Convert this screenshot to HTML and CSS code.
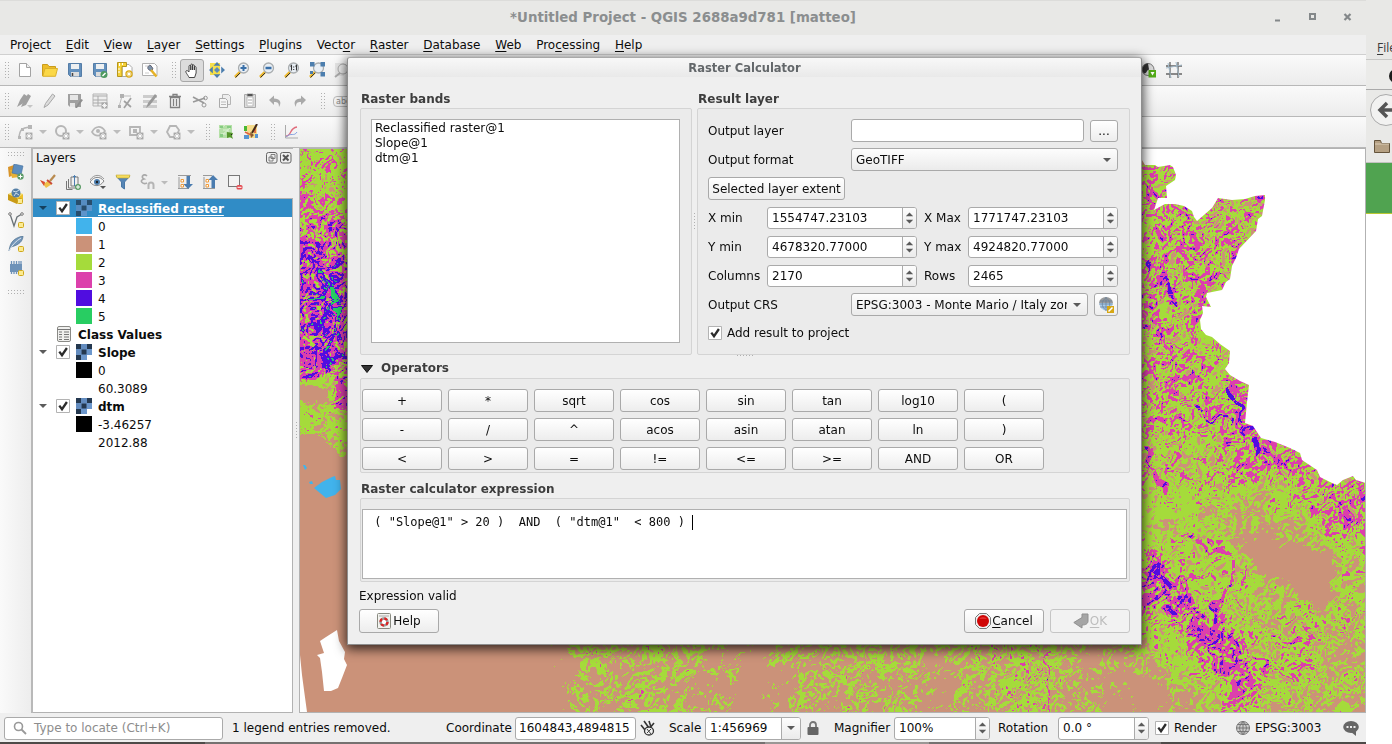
FILE: index.html
```html
<!DOCTYPE html>
<html lang="en">
<head>
<meta charset="utf-8">
<title>QGIS Raster Calculator</title>
<link rel="stylesheet" href="styles.css">
</head>
<body>
<svg class="defs" aria-hidden="true">
  <defs>
    <symbol id="plus-badge" viewBox="0 0 7 7"><path d="M.5 .5h6v6h-6z" fill="#a9a9a9"/><path d="M3.5 1v5M1 3.5h5M2 2l3 3M5 2L2 5" stroke="#fff" stroke-width=".8"/></symbol>
    <symbol id="raster" viewBox="0 0 16 16"><path fill="#6c97cc" d="M0 0h16v11h-5v5H0z"/><path fill="#24384f" d="M0 0h5v5H0zM11 0h5v5h-5zM5.5 5.5h5v5h-5zM0 11h5v5H0z"/><path fill="#3f628d" d="M5 0h6v5H5zM0 5h5v6H0z" opacity=".2"/></symbol>
    <symbol id="lens" viewBox="0 0 16 16"><path d="M1 15l5-5" stroke="#edb72b" stroke-width="2.6"/><path d="M1.500 15.500l5-5" stroke="#333" stroke-width="1"/><circle cx="9.500" cy="6" r="5" fill="#e9eff5" stroke="#a9adaf" stroke-width="1.300"/></symbol>
    <symbol id="globe" viewBox="0 0 16 16"><circle cx="8" cy="8" r="6.500" fill="#ccc" stroke="currentColor"/><path d="M8 1v14M1 8h14M2.500 4.500h11M2.500 11.500h11M8 1.500c-4.500 4-4.500 9 0 13c4.500-4 4.500-9 0-13" fill="none" stroke="currentColor"/></symbol>
    <symbol id="check" viewBox="0 0 14 14"><path d="M.5 .5h13v13H.5z" fill="#fff" stroke="#b3b3b3"/><path d="M3.300 6.600l2.700 3.600 4.900-7.200" fill="none" stroke="#2c2c2c" stroke-width="2.300"/></symbol>
    <symbol id="down" viewBox="0 0 8 4"><path d="M0 0h8L4 4z" fill="currentColor"/></symbol>
    <symbol id="spin" viewBox="0 0 14 20"><path d="M3 8l4-4 4 4zM3 12h8l-4 4z" fill="#5a5a5a"/></symbol>
    <symbol id="ybadge" viewBox="0 0 6 6"><rect x=".5" y=".5" width="5" height="5" rx="1" fill="#fceb91" stroke="#cfa81c"/></symbol>
  </defs>
</svg>

<div class="screen">
 <div class="main">
  <header class="titlebar"><span class="wtitle">*Untitled Project - QGIS 2688a9d781 [matteo]</span>
   <svg class="wbuttons" viewBox="0 0 80 12"><path d="M3 9.500h5" stroke="#84888a" stroke-width="2"/><path d="M38 3h5v5h-5z" fill="none" stroke="#84888a" stroke-width="2"/><path d="M72.500 3l6 6M78.500 3l-6 6" stroke="#84888a" stroke-width="2.200"/></svg>
  </header>
  <nav class="menubar"><span>Pro<u>j</u>ect</span><span><u>E</u>dit</span><span><u>V</u>iew</span><span><u>L</u>ayer</span><span><u>S</u>ettings</span><span><u>P</u>lugins</span><span>Vect<u>o</u>r</span><span><u>R</u>aster</span><span><u>D</u>atabase</span><span><u>W</u>eb</span><span>Pro<u>c</u>essing</span><span><u>H</u>elp</span></nav>

  <div class="toolbar">
   <i class="grip"></i>
   <div class="tools first">
    <svg viewBox="0 0 16 16"><path d="M2.500 1.500h7l4 4v9h-11z" fill="#fff" stroke="#a3a3a3"/><path d="M9.500 1.500v4h4" fill="#eee" stroke="#a3a3a3"/></svg>
    <svg viewBox="0 0 16 16"><path d="M.5 14V2.500h5l1.500 2h6.500V7" fill="#eebd28" stroke="#c99c1c"/><path d="M.8 14.300L3 6.500h12.500l-2 7.800z" fill="#fbd847" stroke="#dbb12b"/></svg>
    <svg viewBox="0 0 16 16"><path d="M1.500 1.500h13v13h-11l-2-2z" fill="#6390bd" stroke="#557da7"/><path d="M4 2h8v5H4z" fill="#eef0f1"/><path d="M4 10h8v4.500H4z" fill="#dcdcdc"/><path d="M5.500 11v3" stroke="#444" stroke-width="1.500"/></svg>
    <svg viewBox="0 0 16 16"><path d="M1.500 1.500h13v13h-11l-2-2z" fill="#6390bd" stroke="#557da7"/><path d="M4 2h8v5H4z" fill="#eef0f1"/><path d="M4 10h6v4.500H4z" fill="#dcdcdc"/><circle cx="12" cy="12.500" r="3.500" fill="#4e9a60"/><path d="M10.500 14l3-3" stroke="#fff" stroke-width="1.400"/></svg>
    <svg viewBox="0 0 16 16"><path d="M5 2.500h7l3 3v9H5z" fill="#fff" stroke="#aaa"/><path d="M.5 .5h9v4H5v10H.500z" fill="#f6d238" stroke="#b5951f"/><path d="M2.500 1v3M5.500 1v2M1 7h2M1 10h2" stroke="#fff"/><circle cx="12" cy="12" r="3.700" fill="#dcac19"/><path d="M9.500 12h5M12 9.500v5M10.500 10.500l3 3M13.500 10.500l-3 3" stroke="#fff"/></svg>
    <svg viewBox="0 0 16 16"><path d="M.5 1.500h12l2.500 2.500v9.500H.5z" fill="#fff" stroke="#b0b0b0"/><path d="M3 4h7M3 11h4" stroke="#ccc"/><path d="M8 3c-2 1-3 3-1.500 4.500L9 9l2-2-1-2z" fill="#7d93a8" stroke="#667"/><path d="M9 8l5.500 6.500" stroke="#e6b226" stroke-width="2.500"/></svg>
   </div>
   <i class="grip"></i>
   <div class="tools nav">
    <span class="pressed"><svg viewBox="0 0 16 16"><path d="M5 14.500C4 12 1 9 2 8s2 0 3 1V3.200c0-1.200 1.800-1.200 1.800 0V7V2c0-1.300 1.800-1.300 1.800 0v5V2.700c0-1.200 1.800-1.200 1.800 0V7V4.500c0-1.200 1.700-1.200 1.700 0V10l-1.500 4.500z" fill="#fff" stroke="#333" stroke-width=".9"/></svg></span>
    <svg viewBox="0 0 16 16"><path d="M1 1h10v12H1z" fill="#f6e04a"/><path d="M8 0l3.500 3.800h-7zM8 16l3.500-3.800h-7zM0 8l3.800-3.500v7zM16 8l-3.800-3.500v7z" fill="#4c7eae"/><path d="M8 5l3 3-3 3-3-3z" fill="#5d8bb8"/></svg>
    <svg viewBox="0 0 16 16"><use href="#lens"/><path d="M9.500 3v6M6.500 6h6" stroke="#386fa8" stroke-width="2"/></svg>
    <svg viewBox="0 0 16 16"><use href="#lens"/><path d="M6.500 6h6" stroke="#386fa8" stroke-width="2.500"/></svg>
    <svg viewBox="0 0 16 16"><use href="#lens"/><path d="M6.500 4.500L7.500 3.500V8.500M11.500 4.500l1-1V8.500M9.700 4.500v1M9.700 7v1" fill="none" stroke="#333" stroke-width="1.100"/></svg>
    <svg viewBox="0 0 16 16"><use href="#lens"/><path d="M1 0h4.500v4.500H1zM11.500 0H16v4.500h-4.500zM11.500 10H16v4.500h-4.500zM1 9h3v3H1z" fill="#4c7eae"/></svg>
    <svg viewBox="0 0 16 16"><path d="M1 1h9v13H1z" fill="#e3e3e3"/><circle cx="9" cy="7" r="5" fill="#eee" stroke="#aaa"/><path d="M1 15l5-4" stroke="#aaa" stroke-width="2"/></svg>
   </div>
   <div class="tools tail">
    <svg viewBox="0 0 16 16"><circle cx="7" cy="7.500" r="6" fill="#ddd" stroke="#777"/><path d="M7 1.500a6 6 0 0 0-4 10c3 0 2-3 5-4z" fill="#333"/><path d="M7.500 8H15v7.500H7.500z" fill="#53ad18"/><path d="M9.500 10h4l-2 3.500z" fill="#fff"/></svg>
    <svg viewBox="0 0 16 16"><path d="M4 0v16M12 0v16M0 4h16M0 12h16" stroke="#666" stroke-width="1.300"/><path d="M2 1l3 15M10 0l3 15M0 6l16-3" stroke="#a3b9c9" fill="none"/></svg>
   </div>
  </div>
  <div class="toolbar">
   <i class="grip"></i>
   <div class="tools first grey">
    <svg viewBox="0 0 16 16"><path d="M0 14L3 7l4-6 3 2-5 8zM4 14l3-7 4-6 3 2-5 9z" fill="#a0a0a0"/><path d="M10 12h6l-3 3z" fill="#c5c5c5"/></svg>
    <svg viewBox="0 0 16 16"><path d="M2 14.500l1.500-4L10.500 1l2.500 2-7 9z" fill="#ddd" stroke="#a8a8a8"/></svg>
    <svg viewBox="0 0 16 16"><path d="M1 1h13v13H3l-2-2z" fill="#a0a0a0"/><path d="M3 2h8v5H3zM3 10h5v4H3z" fill="#e6e6e6"/><path d="M8 15l6-9 2 1-6 8z" fill="#8f8f8f"/></svg>
    <svg viewBox="0 0 16 16"><path d="M1 1h14v12H1z" fill="#eee" stroke="#b5b5b5"/><path d="M1 3h14M1 7h14M1 10h14M6 3v10" stroke="#aaa"/><use href="#plus-badge" x="9" y="9" width="7" height="7"/></svg>
    <svg viewBox="0 0 16 16"><path d="M2 14L5 3l9 0" fill="none" stroke="#bbb"/><path d="M3 1h4v4H3zM1 12h3v3H1z" fill="#b0b0b0"/><path d="M7 8l7 6M14 5l-7 10" stroke="#a1a1a1" stroke-width="1.700"/></svg>
    <svg viewBox="0 0 16 16"><path d="M1 2h14v3H1zM1 7h14v3H1zM1 12h14v3H1z" fill="#ccc"/><path d="M4 15l2-5 7-9 2 2-7 9z" fill="#999"/></svg>
    <svg viewBox="0 0 16 16"><path d="M3.500 4.500h9v10h-9zM2 3.500h12M6 3V1.500h4V3M6.500 6v7M9.500 6v7" fill="none" stroke="#808080" stroke-width="1.300"/></svg>
    <svg viewBox="0 0 16 16"><path d="M1 4l11 6M1 9l12-4" stroke="#999" stroke-width="1.600"/><circle cx="13.500" cy="5" r="1.800" fill="none" stroke="#999"/><circle cx="12" cy="12" r="2" fill="none" stroke="#999"/></svg>
    <svg viewBox="0 0 16 16"><path d="M5.500 1.500h6l2 2v8h-8z" fill="#eee" stroke="#b5b5b5"/><path d="M2.500 5.500h6l2 2v7h-8z" fill="#f5f5f5" stroke="#aaa"/><path d="M4 9h5M4 11.500h5" stroke="#bbb"/></svg>
    <svg viewBox="0 0 16 16"><path d="M2.500 1.500h11v13h-11z" fill="#ddd" stroke="#aaa"/><path d="M5 4h6v9H5z" fill="#fff" stroke="#bbb"/><path d="M5 1h6v2H5zM6 7h4M6 10h4" stroke="#aaa"/></svg>
    <svg viewBox="0 0 16 16"><path d="M2 7l5-4.500v3c6 0 8 4 5 8.500 0-4-1-5-5-5v3z" fill="#a9a9a9"/></svg>
    <svg viewBox="0 0 16 16"><path d="M14 7L9 2.500v3C3 5.500 1 9.500 4 14c0-4 1-5 5-5v3z" fill="#a9a9a9"/></svg>
   </div>
   <i class="grip"></i>
   <span class="abc">abc</span>
  </div>
  <div class="toolbar">
   <i class="grip"></i>
   <div class="tools shapes">
    <svg viewBox="0 0 16 16"><path d="M2 13C3 6 4 4 13 3" fill="none" stroke="#b6b6b6" stroke-width="1.500"/><path d="M1 12h3v3H1zM11 1h4v4h-4zM4 4h3v3H4z" fill="#b6b6b6"/><use href="#plus-badge" x="8" y="8" width="8" height="8"/></svg><svg class="dd" viewBox="0 0 8 4"><use href="#down"/></svg>
    <svg viewBox="0 0 16 16"><circle cx="7" cy="7" r="5" fill="none" stroke="#b6b6b6" stroke-width="2"/><use href="#plus-badge" x="8" y="8" width="8" height="8"/></svg><svg class="dd" viewBox="0 0 8 4"><use href="#down"/></svg>
    <svg viewBox="0 0 16 16"><path d="M1 8c3-6 9-7 13-1-4 6-10 6-13 1z" fill="none" stroke="#b6b6b6" stroke-width="1.700"/><circle cx="7" cy="7" r="2" fill="#b6b6b6"/><use href="#plus-badge" x="8" y="8" width="8" height="8"/></svg><svg class="dd" viewBox="0 0 8 4"><use href="#down"/></svg>
    <svg viewBox="0 0 16 16"><path d="M2 3h10v8H2z" fill="none" stroke="#b6b6b6" stroke-width="1.800"/><path d="M5 5h4v4H5z" fill="#b6b6b6"/><use href="#plus-badge" x="8" y="8" width="8" height="8"/></svg><svg class="dd" viewBox="0 0 8 4"><use href="#down"/></svg>
    <svg viewBox="0 0 16 16"><path d="M2 8l3-6h6l3 4-3 7H5z" fill="none" stroke="#b6b6b6" stroke-width="1.800"/><use href="#plus-badge" x="8" y="8" width="8" height="8"/></svg><svg class="dd" viewBox="0 0 8 4"><use href="#down"/></svg>
   </div>
   <i class="grip"></i>
   <div class="tools osm">
    <svg viewBox="0 0 16 16"><path d="M1 1h13v13H1z" fill="#b4e0a6"/><path d="M1 5l6-4M2 13L13 3M5 6h5v3M3 10h5" stroke="#dff2d6" fill="none"/><path d="M2 2h3v2H2zM9 2h4v2H9zM2 10h3v3H2z" fill="#86cc82"/><path d="M9 8l6 1-1 3 1 3-3-2-3 1z" fill="#55962c"/><path d="M13 10l1 1" stroke="#222"/></svg>
    <svg viewBox="0 0 16 16"><path d="M1 2h5v5H1z" fill="#49b831"/><path d="M4 1h10v13H4z" fill="#f6dc8c"/><path d="M2 8l6 3M12 4v5" stroke="#e0673f" stroke-width="1.800"/><path d="M1 11h5v4H1zM12 10h3v4h-3z" fill="#5794d1"/><path d="M14 0L9 9" fill="none" stroke="#442a18" stroke-width="2"/><path d="M7 8l4 3-3 3z" fill="#8a5a30"/></svg>
   </div>
   <i class="grip"></i>
   <div class="tools"><svg viewBox="0 0 16 16"><path d="M2.500 1v13H15" fill="none" stroke="#aaa"/><path d="M3 12c6 0 3-8 11-9" fill="none" stroke="#e06b7b" stroke-width="1.300"/><path d="M3 13c5-5 8 0 11-5" fill="none" stroke="#839fe0"/></svg></div>
  </div>

  <div class="workspace">
   <aside class="sidebar">
    <i class="hgrip"></i>
    <svg viewBox="0 0 16 16"><path d="M0 3l6-2v10l-5 2z" fill="#d8942a"/><path d="M2 6l8-1 1 8-7 1z" fill="#e7b137"/><path d="M6 0l9 2-2 9-9-2z" fill="#5c8cbd" stroke="#436f9e" stroke-width=".6"/><circle cx="12.500" cy="12.500" r="3.200" fill="#5c9b68"/><path d="M12.500 10.500v4M10.500 12.500h4" stroke="#fff"/></svg>
    <svg viewBox="0 0 16 16"><path d="M0 6l7-3 8 3-6 4z" fill="#f8dd62"/><path d="M0 6l9 4v6l-9-4z" fill="#c99a16"/><path d="M9 10l6-4v5l-6 5z" fill="#eebf29"/><circle cx="8" cy="5" r="4.500" fill="#557fa6"/><path d="M5 3l3 1 3-2M6 8l2-3 3 2" stroke="#cfdeea" fill="none"/><use href="#ybadge" x="9" y="10" width="6" height="6"/></svg>
    <svg viewBox="0 0 16 16"><path d="M2 2l4 12 3-9 5-3" fill="none" stroke="#6a7277" stroke-width="1.300"/><circle cx="2" cy="2" r="1.300" fill="#fff" stroke="#777"/><circle cx="14" cy="2" r="1.300" fill="#fff" stroke="#777"/><use href="#ybadge" x="10" y="10" width="6" height="6"/></svg>
    <svg viewBox="0 0 16 16"><path d="M1 15C2 6 6 2 15 0c0 5-4 9-12 11z" fill="#7396b9" stroke="#4f718f" stroke-width=".7"/><path d="M1 15C4 9 8 5 13 2" stroke="#dce5ee" fill="none"/><use href="#ybadge" x="10" y="10" width="6" height="6"/></svg>
    <svg viewBox="0 0 16 16"><path d="M2 4h12v8H2z" fill="#6e92b8"/><path d="M3.500 1v3M6 1v3M8.500 1v3M11 1v3M13 1v3M3.500 12v2M6 12v2M8.500 12v2" stroke="#6e92b8" stroke-width="1.300"/><use href="#ybadge" x="10" y="10" width="6" height="6"/></svg>
    <i class="hgrip low"></i>
   </aside>
   <section class="layers">
    <div class="dock-title"><span>Layers</span><svg viewBox="0 0 26 12"><rect x=".5" y=".5" width="10.500" height="10.500" rx="2" fill="none" stroke="#666"/><path d="M5 2.500h4v4H5zM3 5h4v4H3z" fill="#efefef" stroke="#666" stroke-width=".8"/><rect x="14.500" y=".5" width="10.500" height="10.500" rx="2" fill="none" stroke="#666"/><path d="M17 3l5.500 5.500M22.500 3L17 8.500" stroke="#555" stroke-width="2"/></svg></div>
    <div class="dock-tools">
     <svg viewBox="0 0 16 16"><path d="M10 7l5-6" stroke="#b98b50" stroke-width="2.200"/><path d="M0 6l5 3 4-3 3 4-6 4z" fill="#f0c04a"/><path d="M0 6l5 2-1 4z" fill="#d94c35"/><path d="M7 6l5 4" stroke="#c9473a" stroke-width="1.800"/></svg>
     <svg viewBox="0 0 16 16"><path d="M6 3h7v9H6zM3.500 5v9h7M1.500 7v8.500h6" fill="none" stroke="#777"/><path d="M9.500 12V1.500L8 3M9.500 1.500L11 3" stroke="#4a7daf" fill="none"/><circle cx="13" cy="13" r="3" fill="#5b9b66"/><path d="M13 11v4M11 13h4" stroke="#fff"/></svg>
     <svg viewBox="0 0 16 16"><path d="M0 8c4-6 10-6 14-1-4 6-10 6-14 1z" fill="#f5f5f5" stroke="#888"/><path d="M0 6c4-6 10-6 14-1" fill="none" stroke="#999"/><circle cx="7" cy="8" r="3" fill="#4d7fb0"/><circle cx="7" cy="8" r="1.200" fill="#222"/><path d="M10 12h6l-3 3z" fill="#555"/></svg>
     <svg viewBox="0 0 16 16"><path d="M1 2h14L9.500 8v7l-3-2V8z" fill="#5585b5" stroke="#4877a6"/><path d="M1 1h14l-1 3H2z" fill="#f5dc5e" stroke="#c6ab33" stroke-width=".6"/></svg>
     <svg class="eps" viewBox="0 0 28 16"><path d="M7 2C4-1 0 3 4 5-1 6 2 11 7 9" fill="none" stroke="#aaa" stroke-width="1.600"/><path d="M8.500 15v-4a2.500 2.500 0 0 1 5 0v4" fill="none" stroke="#b5b5b5" stroke-width="2"/><path d="M21 7h7l-3.500 3.500z" fill="#bbb"/></svg>
     <svg viewBox="0 0 16 16"><path d="M1 1.500h13M2 3v11M1 14.500h11" fill="none" stroke="#999"/><path d="M4 5.500h2.500v2.500H4zM4 10.500h2.500v2.500H4z" fill="#fff" stroke="#f09a38"/><path d="M9.500 2h3.500v8h3l-5 5-4.500-5h3z" fill="#4b7caf"/></svg>
     <svg viewBox="0 0 16 16"><path d="M1 1.500h9M2 3v11M1 14.500h12" fill="none" stroke="#999"/><path d="M4 5.500h2.500v2.500H4zM4 10.500h2.500v2.500H4z" fill="#fff" stroke="#f09a38"/><path d="M9.500 14H13V6h3l-5-5-4.500 5h3z" fill="#4b7caf"/></svg>
     <svg viewBox="0 0 16 16"><rect x="1.500" y="1.500" width="11" height="11" fill="#f3f3f3" stroke="#777"/><rect x="9.500" y="11" width="6" height="4.500" rx="1.500" fill="#e34b51"/><path d="M10.500 13.300h4" stroke="#fff"/></svg>
    </div>
    <div class="tree">
     <div class="row sel"><svg class="exp" viewBox="0 0 8 4"><use href="#down"/></svg><svg class="chk"><use href="#check"/></svg><svg class="ric"><use href="#raster"/></svg><b><u>Reclassified raster</u></b></div>
     <div class="row leg"><i class="sw c0"></i>0</div>
     <div class="row leg"><i class="sw c1"></i>1</div>
     <div class="row leg"><i class="sw c2"></i>2</div>
     <div class="row leg"><i class="sw c3"></i>3</div>
     <div class="row leg"><i class="sw c4"></i>4</div>
     <div class="row leg"><i class="sw c5"></i>5</div>
     <div class="row table"><svg class="tic" viewBox="0 0 14 16"><rect x=".5" y=".5" width="13" height="15" rx="1.500" fill="#f0f0ee" stroke="#8a8a86"/><path d="M.5 3.500h13M2 6h3M7 6h5M2 8.500h3M7 8.500h5M2 11h3M7 11h5M2 13.500h3M7 13.500h5" stroke="#777"/></svg><b>Class Values</b></div>
     <div class="row"><svg class="exp" viewBox="0 0 8 4"><use href="#down"/></svg><svg class="chk"><use href="#check"/></svg><svg class="ric"><use href="#raster"/></svg><b>Slope</b></div>
     <div class="row leg"><i class="sw ck"></i>0</div>
     <div class="row leg"><i class="sw"></i>60.3089</div>
     <div class="row"><svg class="exp" viewBox="0 0 8 4"><use href="#down"/></svg><svg class="chk"><use href="#check"/></svg><svg class="ric"><use href="#raster"/></svg><b>dtm</b></div>
     <div class="row leg"><i class="sw ck"></i>-3.46257</div>
     <div class="row leg"><i class="sw"></i>2012.88</div>
    </div>
   </section>
   <div class="splitter"><i></i></div>
   <div class="mapframe"><canvas id="map" width="1065" height="563"></canvas></div>
  </div>

  <footer class="status">
   <div class="field locator"><svg viewBox="0 0 14 14"><circle cx="5.500" cy="5.500" r="4" fill="none" stroke="#999" stroke-width="1.600"/><path d="M8.500 8.500l4.500 4.500" stroke="#999" stroke-width="1.800"/></svg>Type to locate (Ctrl+K)</div>
   <span>1 legend entries removed.</span>
   <span>Coordinate</span><div class="field coord">1604843,4894815</div>
   <svg class="mouse" viewBox="0 0 16 16"><path d="M1 5l4 5M4 1l5 7M9 1l2 6M14 3l-5 6" stroke="#333" stroke-width="1.600"/><ellipse cx="9" cy="11" rx="4.500" ry="4" fill="#eee" stroke="#333" stroke-width="1.300"/><path d="M7 9l4 5M11 9l-4 4" stroke="#444"/></svg>
   <span>Scale</span><div class="field split scale">1:456969<em><svg class="arr" viewBox="0 0 8 4"><use href="#down"/></svg></em></div>
   <svg class="lock" viewBox="0 0 12 14"><path d="M3 7V4a3 3 0 0 1 6 0v3" fill="none" stroke="#777" stroke-width="1.800"/><rect x=".5" y="6" width="11" height="8" rx="1" fill="#666"/></svg>
   <span>Magnifier</span><div class="field split">100%<em><svg class="sp"><use href="#spin"/></svg></em></div>
   <span>Rotation</span><div class="field split rot">0.0 °<em><svg class="sp"><use href="#spin"/></svg></em></div>
   <svg class="chk"><use href="#check"/></svg><span>Render</span>
   <svg class="gl"><use href="#globe"/></svg><span>EPSG:3003</span>
   <svg class="bubble" viewBox="0 0 16 16"><ellipse cx="8" cy="7" rx="7.800" ry="6" fill="#666"/><path d="M8 12l5-1v5z" fill="#666"/><path d="M3.500 7h2M7 7h2M10.500 7h2" stroke="#eee" stroke-width="2"/></svg>
  </footer>
  <div class="taskbar"></div>
 </div>

 <aside class="browser">
  <div class="bmenu"><u>F</u>ile</div>
  <div class="btab"><svg viewBox="0 0 26 29"><circle cx="30" cy="16" r="7" fill="#1c1c1c"/></svg></div>
  <div class="bnav"><svg viewBox="0 0 26 72"><circle cx="20" cy="20" r="15.500" fill="#f2f2f1" stroke="#aaa"/><path d="M26 20H15M21 13l-7 7 7 7" fill="none" stroke="#555" stroke-width="3.500"/><path d="M8.500 62.500v-12h6l1 3h8v9z" fill="#b5a083" stroke="#65543c"/><path d="M9 54h14" stroke="#dccdb7"/></svg></div>
  <div class="bgreen"></div>
 </aside>

 <div class="dialog">
  <div class="dtitle">Raster Calculator</div>
  <div class="dbody">
   <div class="top">
    <section><h3>Raster bands</h3><div class="group bands"><div class="list"><div>Reclassified raster@1</div><div>Slope@1</div><div>dtm@1</div></div></div></section>
    <i class="vgrip"></i>
    <section><h3>Result layer</h3><div class="group result">
     <div class="frow"><label>Output layer</label><div class="field grow"></div><button class="dots">...</button></div>
     <div class="frow"><label>Output format</label><div class="combo grow">GeoTIFF<svg class="arr" viewBox="0 0 8 4"><use href="#down"/></svg></div></div>
     <div class="frow"><button class="ext">Selected layer extent</button></div>
     <div class="frow sp4"><span>X min</span><div class="field split">1554747.23103<em><svg class="sp"><use href="#spin"/></svg></em></div><span>X Max</span><div class="field split">1771747.23103<em><svg class="sp"><use href="#spin"/></svg></em></div></div>
     <div class="frow sp4"><span>Y min</span><div class="field split">4678320.77000<em><svg class="sp"><use href="#spin"/></svg></em></div><span>Y max</span><div class="field split">4924820.77000<em><svg class="sp"><use href="#spin"/></svg></em></div></div>
     <div class="frow sp4"><span>Columns</span><div class="field split">2170<em><svg class="sp"><use href="#spin"/></svg></em></div><span>Rows</span><div class="field split">2465<em><svg class="sp"><use href="#spin"/></svg></em></div></div>
     <div class="frow"><label>Output CRS</label><div class="combo grow"><span class="clip">EPSG:3003 - Monte Mario / Italy zone 1</span><svg class="arr" viewBox="0 0 8 4"><use href="#down"/></svg></div><button class="crs"><svg viewBox="0 0 16 16"><circle cx="8" cy="7" r="6.500" fill="#a9cbea"/><path d="M1 6a7 6 0 0 1 14 0z" fill="#9a9a9a"/><path d="M8 .5v13M1 7h14M2 4h12M2 10h12M8 .5c-5 4-5 9 0 13c5-4 5-9 0-13" fill="none" stroke="#64809a" stroke-width=".7"/><path d="M9 9h7v7H9z" fill="#d7a714"/><path d="M10.500 14.500l4-4" stroke="#fff" stroke-width="1.600"/></svg></button></div>
     <div class="frow last"><svg class="chk"><use href="#check"/></svg><span>Add result to project</span></div>
    </div></section>
   </div>
   <i class="mgrip"></i>
   <h3 class="ophead"><svg viewBox="0 0 12 8"><path d="M.5 .5h11L6 7.500z" fill="#333" stroke="#111"/></svg>Operators</h3>
   <div class="group ops">
    <button>+</button><button>*</button><button>sqrt</button><button>cos</button><button>sin</button><button>tan</button><button>log10</button><button>(</button>
    <button>-</button><button>/</button><button>^</button><button>acos</button><button>asin</button><button>atan</button><button>ln</button><button>)</button>
    <button>&lt;</button><button>&gt;</button><button>=</button><button>!=</button><button>&lt;=</button><button>&gt;=</button><button>AND</button><button>OR</button>
   </div>
   <h3 class="exhead">Raster calculator expression</h3>
   <div class="group expr"><div class="code"> ( "Slope@1" &gt; 20 )  AND  ( "dtm@1"  &lt; 800 ) <i></i></div></div>
   <div class="valid">Expression valid</div>
   <div class="actions">
    <button><svg viewBox="0 0 14 16"><rect x=".5" y=".5" width="13" height="15" rx="1" fill="#f3f3ef" stroke="#888a80"/><path d="M2 3h10" stroke="#aaa"/><circle cx="7" cy="9" r="3.500" fill="#fff" stroke="#999" stroke-width="2.400"/><circle cx="7" cy="9" r="3.500" fill="none" stroke="#d22" stroke-width="2.400" stroke-dasharray="3 2.500"/></svg>Help</button>
    <button class="cancel"><svg viewBox="0 0 16 16"><path d="M4.500 .5h7l4 4v7l-4 4h-7l-4-4v-7z" fill="#eee" stroke="#777"/><circle cx="8" cy="8" r="6" fill="#cf0505"/><path d="M4 6a4.500 3.500 0 0 1 8 0z" fill="#e22e2e"/></svg><span><u>C</u>ancel</span></button>
    <button class="ok"><svg viewBox="0 0 16 16"><path d="M9 4.500V1h6v7c0 2.500-2 4-6 4v3L.8 9.500 9 4.500z" fill="#a5a5a5" stroke="#8f8f8f"/></svg><span><u>O</u>K</span></button>
   </div>
  </div>
 </div>
</div>
<script src="map.js"></script>
</body>
</html>
```
FILE: styles.css
```css
* { box-sizing: border-box; }
body { margin: 0; font: 12px/15px "DejaVu Sans", sans-serif; color: #0c0c0c; overflow: hidden; }
svg { display: block; flex: none; }
i, em { font-style: normal; }
u { text-decoration-thickness: 1px; text-underline-offset: 2px; }
.defs { position: absolute; width: 0; height: 0; }
.screen { position: relative; display: flex; width: 1392px; height: 744px; background: #fff; }
.main { width: 1366px; display: flex; flex-direction: column; background: #efefef; }

.titlebar { height: 35px; display: flex; align-items: center; justify-content: center; background: #e8e8e6; border-top: 1px solid #dcdcda; padding-bottom: 2px; position: relative; }
.wtitle { font-weight: bold; font-size: 13.35px; color: #8b8e8f; }
.wbuttons { position: absolute; right: 14px; top: 10px; width: 80px; height: 12px; }
.menubar { height: 20px; display: flex; gap: 14.73px; padding: 3px 0 0 10px; line-height: 14px; border-bottom: 1px solid #d0d0d0; }
.toolbar { height: 31px; flex: none; display: flex; align-items: center; padding-left: 5px; background: linear-gradient(#fafafa, #ececec); border-bottom: 1px solid #b8b8b8; }
.grip, .hgrip, .vgrip, .mgrip, .splitter i { background: radial-gradient(circle at .5px .5px, #b0b0b0 .6px, transparent .7px) 0 0 / 3px 3px; }
.grip { width: 4px; height: 17px; flex: none; }
.tools { display: flex; align-items: center; gap: 9px; }
.tools svg { width: 16px; height: 16px; }
.tools.first { margin: 0 14px 0 8px; }
.tools.first.grey { margin-right: 13px; }
.nav { margin-left: 4px; }
.pressed { width: 24px; height: 23px; padding: 3px; margin-right: -4px; border: 1px solid #a8a8a8; border-radius: 3px; background: #dcdcdc; }
.tail { margin-left: 791px; }
.abc { margin-left: 8px; width: 24px; font-size: 8px; color: #888; border: 1px solid #bbb; border-radius: 4px; line-height: 9px; padding-left: 2px; }
.shapes { margin: 0 4px 0 8px; gap: 0; }
.shapes svg { margin-right: 6px; }
.shapes svg.dd { width: 8px; height: 4px; margin-right: 7px; color: #bdbdbd; }
.osm { margin: 0 12px 0 8px; }
.toolbar .grip + .tools:last-child { margin-left: 8px; }

.workspace { height: 565px; flex: none; display: flex; }
.sidebar { width: 33px; padding: 4px 0 0 8px; background: linear-gradient(90deg, #fafafa, #ededed); border-right: 2px solid #b9b9b9; }
.sidebar svg { width: 16px; height: 16px; margin-bottom: 8px; }
.hgrip { display: block; width: 17px; height: 5px; margin-bottom: 7px; }
.hgrip.low { margin-top: 14px; }
.layers { width: 260px; display: flex; flex-direction: column; border-top: 1px solid #b9b9b9; }
.dock-title { height: 18px; display: flex; align-items: center; justify-content: space-between; padding: 0 1px 0 3px; }
.dock-title svg { width: 26px; height: 12px; }
.dock-tools { height: 31px; display: flex; align-items: center; gap: 9px; padding: 0 0 1px 7px; }
.dock-tools svg { width: 16px; height: 16px; }
.dock-tools .eps { width: 28px; height: 16px; }
.tree { flex: 1; background: #fff; border: 1px solid #b2b2b2; border-left: 0; }
.row { height: 18px; display: flex; align-items: center; padding: 2px 0 0 6px; }
.row.sel { background: #308cc6; color: #fff; }
.row.sel .exp { color: #14405e; }
.row.sel .ric { opacity: .75; }
.exp { width: 8px; height: 4px; margin-bottom: 2px; color: #5c5c5c; }
.chk { width: 14px; height: 14px; }
.row .chk { margin: 0 6px 2px 9px; }
.ric { width: 16px; height: 16px; margin: 0 6px 2px 0; }
.row.leg { padding-left: 43px; }
.sw { width: 16px; height: 16px; margin: 0 6px 2px 0; }
.c0 { background: #41b3ec; } .c1 { background: #cb9279; } .c2 { background: #a5db3b; }
.c3 { background: #dc40ac; } .c4 { background: #500de0; } .c5 { background: #28cd62; } .ck { background: #000; }
.row.table { padding-left: 24px; }
.tic { width: 14px; height: 16px; margin: 0 7px 2px 0; }
.splitter { width: 6px; display: flex; align-items: center; justify-content: center; }
.splitter i { width: 1px; height: 17px; }
.mapframe { width: 1067px; height: 565px; border: 1px solid #b2b2b2; background: #fff; }
#map { display: block; }

.field { height: 23px; background: #fff; border: 1px solid #aaa; border-radius: 3px; padding-left: 4px; display: flex; align-items: center; white-space: nowrap; overflow: hidden; }
.split { height: 22px; justify-content: space-between; }
.split em { width: 14px; align-self: stretch; border-left: 1px solid #aaa; display: grid; place-items: center; background: linear-gradient(#fdfdfd, #ebebeb); }
.sp { width: 13px; height: 20px; }
.arr { width: 8px; height: 4px; color: #5a5a5a; }
.status { height: 29px; flex: none; display: grid; align-items: center; padding: 1px 0 0 4px; grid-template-columns: 228px 214px 69px 125px 29px 36px 102px 27px 60px 104px 60px 97px 19px 61px 20px 88px 16px; }
.status .field { height: 23px; }
.status .locator { width: 219px; color: #8d8d8d; gap: 7px; padding-left: 8px; }
.locator svg { width: 14px; height: 14px; }
.coord { width: 121px; padding-left: 3px; }
.status .split { width: 96px; }
.status .rot { width: 91px; }
.status .scale em { width: 19px; }
.mouse { width: 16px; height: 16px; }
.lock { width: 12px; height: 14px; }
.gl { width: 16px; height: 16px; color: #777; }
.bubble { width: 16px; height: 16px; }
.taskbar { flex: 1; background: linear-gradient(90deg, #4e4a48 0 15%, #757170 15% 56%, #9a9795 56% 68%, #757170 68% 85%, #4e4a48 85%); }

.browser { width: 26px; background: #fff; overflow: hidden; }
.bmenu { height: 60px; padding: 40px 0 0 11px; background: #e8e8e6; border-bottom: 1px solid #c8c8c6; font-family: "Open Sans", sans-serif; color: #3a3a3a; }
.btab { height: 30px; background: #ebebe9; border-bottom: 1px solid #aaa; }
.bnav { height: 73px; background: #e9e9e7; border-bottom: 1px solid #c2c2c0; }
.btab svg { width: 26px; height: 29px; }
.bnav svg { width: 26px; height: 72px; }
.bgreen { height: 51px; background: #50a350; border-bottom: 1px solid #b9c832; }

.dialog { position: absolute; left: 347px; top: 57px; width: 795px; height: 588px; background: #efefef; border: 1px solid #8e8e8e; border-top-color: #a9a9a9; border-radius: 3px 3px 0 0; box-shadow: 0 3px 12px 1px rgba(0,0,0,.75); }
.dtitle { height: 19px; text-align: center; font-weight: bold; font-size: 11.5px; line-height: 21px; color: #63676a; background: linear-gradient(#f8f8f8, #e9e9e9); border-radius: 3px 3px 0 0; }
.dbody { padding: 13px 11px 0 12px; }
h3 { margin: 0; font: bold 12px/15px "DejaVu Sans", sans-serif; color: #3d3d3d; padding: 2px 0 0 1px; height: 18px; }
.group { background: #ebebeb; border: 1px solid #d4d4d4; border-radius: 2px; }
.top { display: grid; grid-template-columns: 332px 5px 433px; height: 264px; }
.top .group { height: 247px; }
.bands { padding: 10px 11px 11px 10px; }
.list { height: 224px; background: #fff; border: 1px solid #b0b0b0; padding: 1px 3px; }
.vgrip { width: 1px; height: 18px; margin: 123px 0 0 2px; }
.result { padding: 7px 11px 0 10px; }
.frow { height: 29px; display: flex; align-items: center; gap: 6px; }
.frow label, .frow > span { padding-top: 1px; }
.frow label { width: 137px; }
.frow .grow { flex: 1; min-width: 0; }
button { font: inherit; color: inherit; height: 23px; padding: 1px 0 0; display: flex; align-items: center; justify-content: center; border: 1px solid #a9a9a9; border-radius: 3px; background: linear-gradient(#fff, #ededed); }
.combo { height: 23px; display: flex; align-items: center; justify-content: space-between; padding: 1px 6px 0 4px; border: 1px solid #a9a9a9; border-radius: 3px; background: linear-gradient(#fdfdfd, #ebebeb); }
.clip { width: 211px; overflow: hidden; white-space: nowrap; }
.dots { width: 28px; height: 22px; }
.ext { width: 137px; }
.sp4 { display: grid; grid-template-columns: 59px 150px 51px 150px; gap: 0; }
.sp4 > span:nth-of-type(2) { padding-left: 7px; }
.sp4 .split { line-height: 16px; }
.crs { width: 24px; }
.crs svg { width: 16px; height: 16px; }
.last { height: 27px; gap: 5px; }
.mgrip { display: block; width: 16px; height: 1px; margin: 1px auto 5px; }
.ophead { display: flex; align-items: center; height: 15px; margin: 0 0 2px; padding: 0 0 0 1px; }
.ophead svg { width: 12px; height: 8px; margin-right: 8px; }
.ops { height: 95px; padding: 10px 0 0 1px; display: grid; grid-template-columns: repeat(8, 80px); grid-auto-rows: 23px; gap: 6px; }
.exhead { margin-top: 8px; height: 17px; padding-top: 1px; }
.expr { height: 84px; padding: 10px 2px 2px 1px; }
.code { height: 70px; border: 1px solid #b0b0b0; background: #fff; padding: 5px 4px; font: 12px/15px "DejaVu Sans Mono", monospace; white-space: pre; }
.code i { display: inline-block; width: 1px; height: 15px; background: #000; vertical-align: middle; }
.valid { margin: 7px 0 5px -1px; }
.actions { display: flex; margin-left: -1px; }
.actions button { width: 80px; height: 24px; gap: 2px; padding-top: 0; }
.actions svg { width: 14px; height: 16px; }
.actions .cancel { margin-left: auto; margin-right: 6px; gap: 1px; }
.actions .cancel svg, .actions .ok svg { width: 16px; }
.actions .ok { color: #bdbdbd; border-color: #c5c5c5; gap: 1px; background: #f2f2f2; }
```
FILE: map.js
```js
// Draws the classified slope raster: a smooth class surface perturbed by ridge noise.
(function () {
  var OX = 300, OY = 149, W = 1065, H = 563;
  var ctx = document.getElementById('map').getContext('2d');
  var palette = [[65,179,236],[203,146,121],[165,219,59],[220,64,172],[80,13,224],[40,205,98]];

  // x, y, mean class, roughness
  var pts = [
    [310,160,2.1,.8],[340,170,2.2,.8],[310,200,2.5,1],[335,190,1.9,.7],[320,232,2.7,1.3],[340,245,2.6,1.4],
    [310,270,3.2,1.3],[335,275,3.4,1.5],[315,300,3.3,1.6],[340,300,3.4,1.5],[310,335,3.2,1.4],[335,345,3.3,1.5],
    [310,370,3.2,1.3],[340,370,2.9,1.2],[345,395,3,1.2],[310,392,1,.2],[322,400,1.1,.4],[310,415,1.8,.7],[335,425,1.7,.8],
    [340,440,1.6,.7],[310,450,1,.1],[335,465,1,.2],[320,520,1,0],[320,600,1,0],[340,690,1,0],[450,680,1,0],[535,680,1,0],
    [562,674,1.1,.4],[590,660,1.4,.9],[600,695,1.35,.9],[635,680,1.4,1],[655,702,1.4,.9],[690,662,1.35,.9],[705,700,1.15,.6],[725,670,1.2,.7],[748,680,1,0],
    [775,690,1.1,.6],[810,660,1.35,.9],[815,695,1.3,.9],[860,700,1.45,1],[870,660,1.4,.9],[915,670,1.25,.9],[945,690,1.1,.6],
    [970,690,1.35,1],[1005,655,1.8,1.1],[1025,680,1.7,1.1],[1050,670,1.7,1],[1075,700,1.2,.7],[1090,670,1.1,.6],[1120,690,1.1,.5],
    [1150,660,1.4,.8],[1150,690,1,.3],[1185,700,1.3,.7],[1175,655,1.9,.7],
    [1155,172,2.1,1],[1150,205,2.25,1.1],[1180,220,2.2,1.2],[1240,210,2.1,1.2],[1255,205,2.2,1.2],[1220,250,2.25,1.2],[1215,280,2.4,1.1],
    [1150,250,2.3,1.2],[1160,290,2.4,1.4],[1185,320,2,1],[1155,345,2.3,1.3],[1210,345,1.9,1],[1220,365,2.2,1.1],
    [1175,370,2.4,1.2],[1150,400,2.3,1.1],[1230,400,2.4,1.1],[1180,410,2.1,1.1],[1150,440,2,1],[1200,460,2,1.1],[1250,440,2.4,1.2],
    [1290,465,2.4,1.2],[1225,480,2,1],[1180,510,1.7,.7],[1200,530,1.8,.8],[1150,530,1.8,.7],[1245,510,1.3,.7],[1290,490,1.9,.9],[1330,500,2.4,1.2],
    [1352,515,2.5,1.2],[1350,540,1.9,.9],[1290,530,1.4,.7],[1260,545,1.05,.25],[1285,560,1,.15],[1320,570,1,.15],[1320,590,1.1,.3],[1355,580,1.8,.9],
    [1190,560,1.9,.9],[1230,565,1.9,.8],[1260,590,1.7,.8],[1210,595,1.8,.8],[1240,620,1.9,1],[1310,620,1.9,1.1],[1350,620,1.9,1.1],
    [1163,585,2.9,1.3],[1170,600,2.9,1.3],[1150,620,2,.9],[1195,630,2.7,1.1],[1222,650,2.9,1.3],[1240,675,2.6,1.1],[1175,645,1.9,.8],
    [1190,680,1.9,.8],[1270,650,1.9,1],[1300,660,1.9,1],[1340,645,1.3,.8],[1280,690,1.6,.9],[1330,690,1.5,.9],[1355,700,1.5,.9]
  ];

  // narrow steep valleys: x1, y1, x2, y2, half width, class boost
  var lines = [
    [1190,408,1228,424,1.6,1.6],[1225,391,1243,418,2,1.6],[1243,426,1275,462,4,.6],[1142,446,1162,490,3,1],[1145,548,1165,580,3,.9],
    [1230,556,1228,580,1.5,1],[1228,580,1212,620,2.5,.9],[1185,535,1225,552,3,.8],[1240,560,1240,585,1.5,.9],
    [1165,585,1200,630,5,.25],[1200,630,1245,685,7,.25],[1143,260,1175,300,3,.7],[1270,640,1305,640,2,.9],[1255,658,1290,680,1.5,.9],
    [1258,440,1262,450,2,1],[1046,655,1048,710,1,1.2],[325,275,340,320,2.5,1.2],[333,290,330,350,2,.9]
  ];

  function hash(x, y, s) {
    var h = Math.imul(x, 374761393) + Math.imul(y, 668265263) + Math.imul(s, 1274126177) | 0;
    h = Math.imul(h ^ (h >>> 13), 1274126177);
    return ((h ^ (h >>> 16)) >>> 0) / 4294967295;
  }
  function noise(x, y, s) {
    var xi = Math.floor(x), yi = Math.floor(y), fx = x - xi, fy = y - yi;
    fx = fx * fx * (3 - 2 * fx); fy = fy * fy * (3 - 2 * fy);
    var a = hash(xi, yi, s), b = hash(xi + 1, yi, s), c = hash(xi, yi + 1, s), d = hash(xi + 1, yi + 1, s);
    return (a + (b - a) * fx) * (1 - fy) + (c + (d - c) * fx) * fy;
  }
  function segDist(x, y, l) {
    var dx = l[2] - l[0], dy = l[3] - l[1], q = dx * dx + dy * dy || 1;
    var t = Math.max(0, Math.min(1, ((x - l[0]) * dx + (y - l[1]) * dy) / q));
    return Math.hypot(x - l[0] - t * dx, y - l[1] - t * dy);
  }

  var img = ctx.createImageData(W, H);
  for (var j = 0; j < H; j++) {
    for (var i = 0; i < W; i++) {
      var x = i + OX, y = j + OY;
      if (x > 349 && x < 1140 && y < 643) continue;
      var wx = x + 14 * (noise(x / 11, y / 11, 7) - .5), wy = y + 14 * (noise(x / 11, y / 11, 8) - .5);
      var sw = 0, sl = 0, sa = 0;
      for (var k = 0; k < pts.length; k++) {
        var p = pts[k], d = (wx - p[0]) * (wx - p[0]) + (wy - p[1]) * (wy - p[1]) + 20, w = 1 / (d * d);
        sw += w; sl += w * p[2]; sa += w * p[3];
      }
      var ridge = 1 - 4 * Math.abs(noise(wx / 5, wy / 5, 1) - .5);
      var streak = noise((wx + wy) / 2.4, (wx - wy) / 6, 4) - .5;
      var n = .65 * ridge + 1.1 * (noise(x / 2, y / 2, 2) - .5) + 1.4 * streak + .9 * (noise(wx / 9, wy / 9, 3) - .5);
      var v = sl / sw + sa / sw * (n - .15) * .95;
      for (k = 0; k < lines.length; k++) {
        if (segDist(wx, wy, lines[k]) < lines[k][4]) v += lines[k][5];
      }
      var c = palette[Math.max(1, Math.min(v > 4.7 && x < 400 ? 5 : 4, Math.round(v)))], o = (j * W + i) * 4;
      img.data[o] = c[0]; img.data[o + 1] = c[1]; img.data[o + 2] = c[2]; img.data[o + 3] = 255;
    }
  }
  ctx.putImageData(img, 0, 0);

  function poly(coords, fill) {
    ctx.beginPath();
    for (var m = 0; m < coords.length; m += 2) ctx.lineTo(coords[m] - OX, coords[m + 1] - OY);
    ctx.closePath(); ctx.fillStyle = fill; ctx.fill();
  }
  // sea
  poly([1139,149,1139,160,1142,160,1145,165,1155,165,1158,167,1170,165,1173,167,1176,175,1175,180,1166,186,1167,198,1158,198,1154,210,1165,204,1175,204,1184,206,1192,211,1194,217,1197,221,1212,208,1218,198,1232,200,1245,199,1255,196,1265,195,1265,200,1262,216,1258,219,1256,231,1239,249,1236,258,1232,266,1230,279,1226,282,1222,290,1207,293,1206,297,1211,307,1202,306,1203,313,1200,320,1201,329,1206,335,1212,337,1220,344,1230,351,1229,363,1225,369,1230,375,1240,381,1249,385,1247,402,1245,423,1253,426,1261,438,1275,442,1290,448,1300,453,1302,460,1317,470,1320,477,1330,482,1337,485,1343,480,1353,476,1356,480,1366,483,1366,149], '#fff');
  poly([337,630,339,641,345,652,344,659,347,665,342,678,338,688,331,691,324,691,322,672,320,658,317,655,324,653,320,641,326,637], '#fff');
  poly([300,655,302,675,304,690,307,712,300,712], '#fff');
  // lakes
  poly([314,488,322,482,332,477,335,476,336,480,340,480,341,489,335,495,326,498], '#41b3ec');
  poly([303,465,305,465,307,468,305,470], '#41b3ec');
  poly([309,482,312,481,313,484,310,484], '#41b3ec');
})();
```
